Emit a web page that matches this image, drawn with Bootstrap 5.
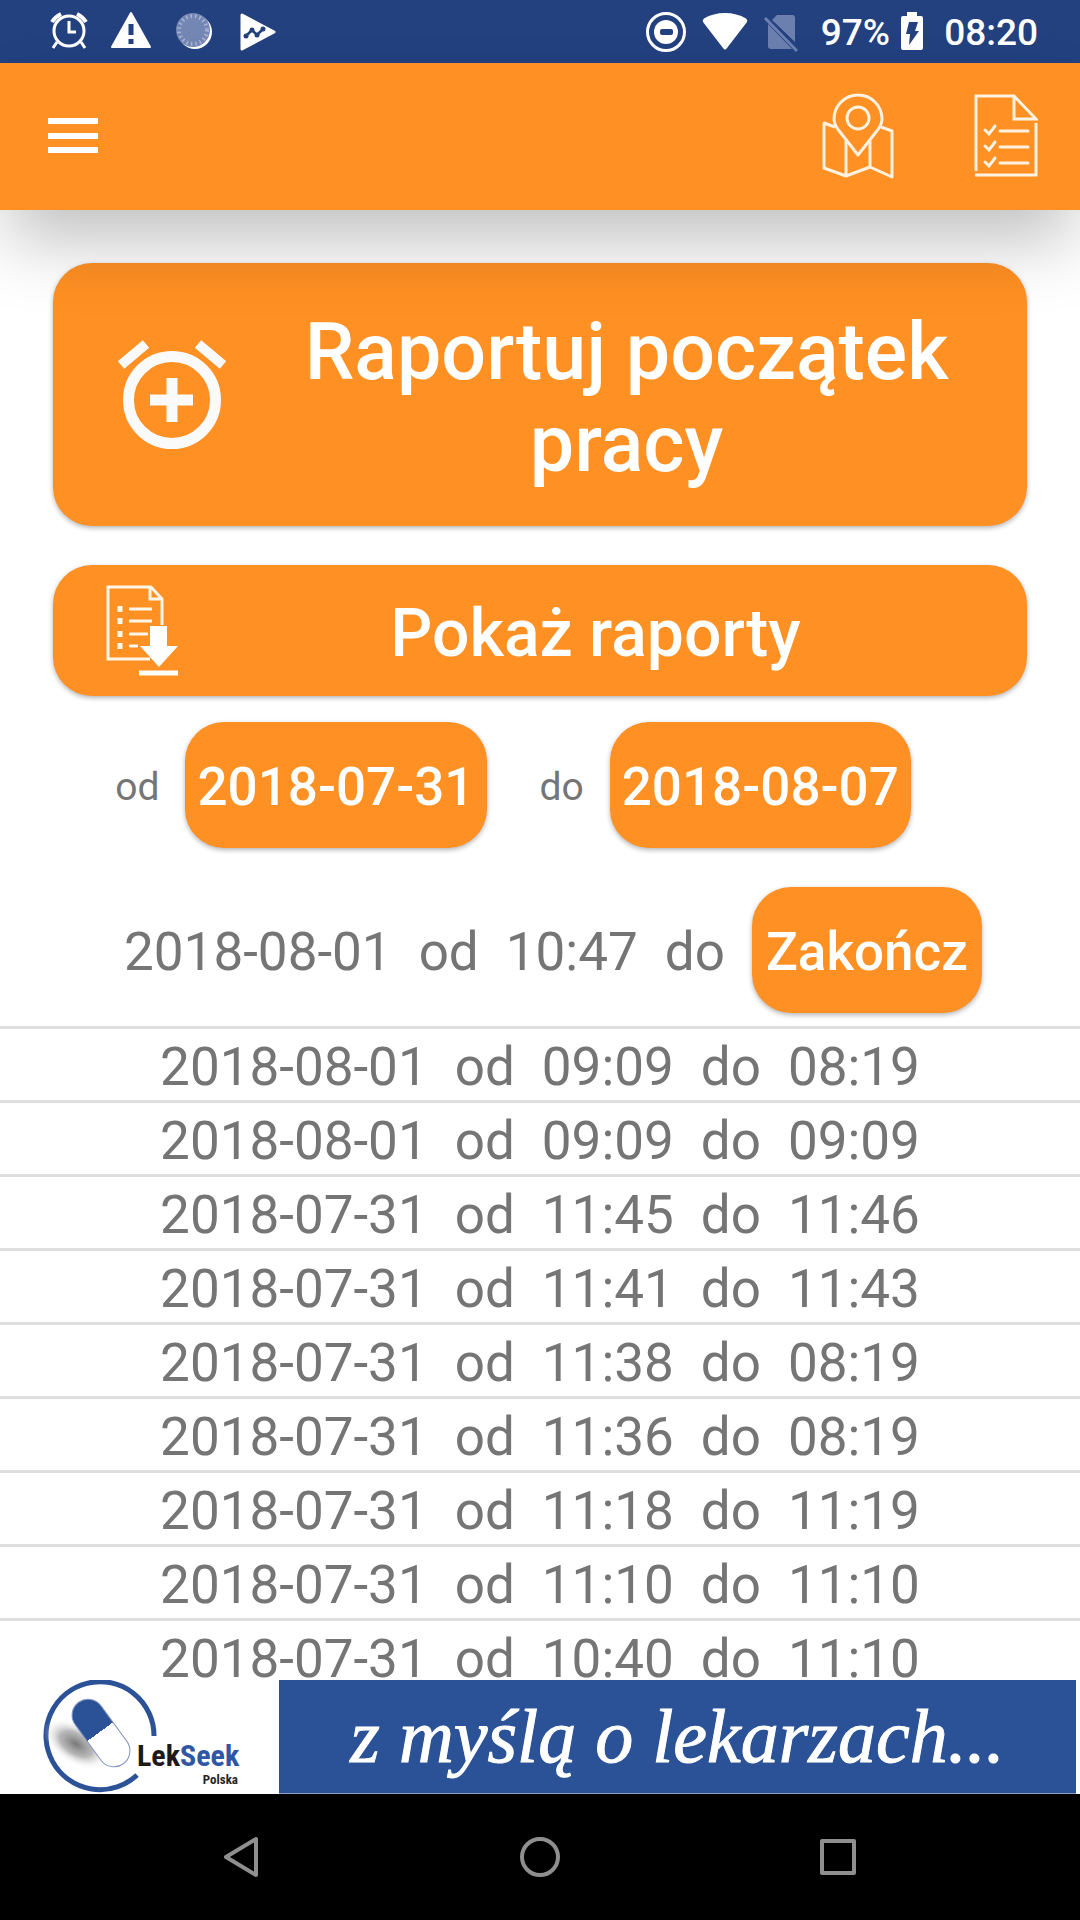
<!DOCTYPE html>
<html lang="pl">
<head>
<meta charset="utf-8">
<meta name="viewport" content="width=device-width, initial-scale=1">
<title>LekSeek – raport czasu pracy</title>
<link href="https://cdn.jsdelivr.net/npm/bootstrap@5.3.0/dist/css/bootstrap.min.css" rel="stylesheet">
<style>
  :root { --brand: #ff9023; --navy: #23407f; --banner: #2b5197; --ink: #757575; --rule: #dedede; }
  body { font-family: Roboto, "Noto Sans", sans-serif; color: var(--ink); background: #fff; font-size: 53px; line-height: 62px; }
  svg { display: block; flex: none; }
  .status-bar { background: var(--navy); color: #fff; height: 63px; padding: 0 42px 0 48px; font-size: 37px; line-height: 44px; font-weight: 500; }
  .status-bar span, .status-bar time { padding-top: 2px; }
  .status-left { gap: 21px; }
  .status-right { gap: 18px; }
  .status-signals { gap: 15px; }
  .app-bar { background: var(--brand); height: 147px; padding: 0 42px 2px 48px; z-index: 2; box-shadow: 0 38px 70px -8px rgba(0,0,0,.25); }
  .app-actions { gap: 80px; }
  .bare { background: none; border: 0; padding: 0; color: #fff; }
  .screen { min-height: 0; overflow-y: auto; scrollbar-width: none; }
  .screen::-webkit-scrollbar { display: none; }
  .actions { padding: 53px 53px 0; gap: 39px; }
  .btn-brand {
    --bs-btn-color: #fff; --bs-btn-bg: var(--brand); --bs-btn-hover-color: #fff; --bs-btn-hover-bg: #f58616;
    --bs-btn-active-color: #fff; --bs-btn-active-bg: #e87b0d; --bs-btn-border-width: 0; --bs-btn-border-radius: 39px;
    --bs-btn-font-weight: 500; --bs-btn-font-size: 53px; --bs-btn-line-height: 62px;
    padding: 34px 14px 30px;
    box-shadow: 0 2px 5px rgba(0,0,0,.3);
  }
  .btn-start { --bs-btn-font-size: 79px; --bs-btn-line-height: 92px; padding: 37px 0 36px 65px; }
  .btn-reports { --bs-btn-font-size: 66px; --bs-btn-line-height: 77px; padding: 20px 14px 20px 53px; }
  .btn-label { padding-top: 6px; }
  .range { padding: 26px 54px 0 0; gap: 53px; font-size: 39px; line-height: 46px; }
  .range-part { gap: 26px; }
  .range-part span { padding-top: 4px; }
  .range-part .btn { padding-left: 12px; padding-right: 12px; }
  .entry { border-bottom: 3px solid var(--rule); padding: 5px 0 0; gap: 27px; line-height: 66px; }
  .entry-open { padding: 39px 0 13px 26px; line-height: 62px; }
  .entry-open span, .entry-open time { padding-top: 4px; }
  .ad-strip { height: 114px; padding-right: 4px; background: #fff; }
  .ad-logo { width: 279px; padding-left: 40px; }
  .ad-text { background: var(--banner); color: #fff; border-bottom: 1px solid #8c9dc4; font: italic 400 76px/112px "Liberation Serif", serif; -webkit-text-stroke: 1px #fff; }
  .logo-name { font: bold 30px "Liberation Sans Narrow", "Roboto Condensed", Roboto, sans-serif; }
  .logo-land { font: bold 13px "Liberation Sans Narrow", "Roboto Condensed", Roboto, sans-serif; }
  .sys-nav { background: #000; height: 126px; gap: 256px; }
</style>
</head>
<body class="vh-100 d-flex flex-column overflow-hidden">

<div class="status-bar d-flex align-items-center justify-content-between flex-shrink-0">
  <div class="status-left d-flex align-items-center">
    <svg width="42" height="42" viewBox="0 1 42 42" fill="none" stroke="#fff" stroke-width="3"><circle cx="21" cy="21" r="15"/><path d="M21 11v11h7M9 32l-4 6M33 32l4 6" /><path d="M4 12q3-5 9-8M38 12q-3-5-9-8" stroke-width="4"/></svg>
    <svg width="42" height="42" viewBox="1 1 42 42"><path d="M21 3 40 37H2Z" fill="#fff" stroke="#fff" stroke-width="2" stroke-linejoin="round"/><path d="M18.500 14h5v11h-5zM18.500 29h5v5h-5z" fill="#23407f"/></svg>
    <svg width="42" height="42" viewBox="1 1 42 42"><circle cx="22" cy="22" r="17" fill="#fff"/><circle cx="20" cy="20" r="17" fill="#7486b3"/><circle cx="20" cy="20" r="14" fill="none" stroke="#a9b5d2" stroke-width="4" stroke-dasharray="1.500 3"/></svg>
    <svg width="42" height="42" viewBox="0 0 42 42"><path d="M5 4 37 21 5 38Z" fill="#fff" stroke="#fff" stroke-width="3" stroke-linejoin="round"/><path d="M9 25 15 19 20 24 26 18" fill="none" stroke="#23407f" stroke-width="2.500"/><g fill="#23407f"><circle cx="9" cy="25" r="2.500"/><circle cx="15" cy="19" r="2.500"/><circle cx="20" cy="24" r="2.500"/><circle cx="26" cy="18" r="2.500"/></g></svg>
  </div>
  <div class="status-right d-flex align-items-center">
    <div class="status-signals d-flex align-items-center">
      <svg width="42" height="42" viewBox="0 0 42 42"><circle cx="21" cy="21" r="18.500" fill="none" stroke="#fff" stroke-width="3"/><circle cx="21" cy="21" r="12" fill="#fff"/><rect x="15" y="18" width="13" height="6" rx="2" fill="#23407f"/></svg>
      <svg width="46" height="42" viewBox="0 0 46 42"><path d="M23 38.500q-1 0-2-1.500L1 11q-1-2 1-3.500Q11 2 23 2t21 5.500q2 1.500 1 3.500L25 37q-1 1.500-2 1.500Z" fill="#fff"/></svg>
      <svg width="40" height="42" viewBox="0 0 40 42"><path d="M14 4h15a3 3 0 0 1 3 3v24L9 9Z M5 13 29 38H8a3 3 0 0 1-3-3Z" fill="#6c80b0"/><path d="M2 7 34 40" stroke="#6c80b0" stroke-width="3"/></svg>
    </div>
    <div class="d-flex align-items-center gap-2"><span>97%</span>
      <svg width="28" height="42" viewBox="0 1 28 42"><path d="M9 2h10v4h4q2 0 2 2v30q0 2-2 2H5q-2 0-2-2V8q0-2 2-2h4Z" fill="#fff"/><path d="M11 12h9l-3 9h4L11 35l1-11H8Z" fill="#23407f"/></svg>
    </div>
    <time>08:20</time>
  </div>
</div>

<header class="app-bar d-flex align-items-center justify-content-between position-relative flex-shrink-0">
  <button type="button" class="bare" aria-label="Menu">
    <svg width="50" height="36" viewBox="0 0 50 36" fill="#fff"><path d="M0 0h50v6H0zM0 15h50v6H0zM0 29h50v6H0z"/></svg>
  </button>
  <div class="app-actions d-flex align-items-center">
    <a href="#mapa" class="bare" aria-label="Mapa">
      <svg width="72" height="86" viewBox="0 0 72 86" fill="none" stroke="#fff2e0" stroke-width="3" stroke-linejoin="round"><path d="M36 62 18 39Q12 32 12 26a24 24 0 0 1 48 0q0 6-6 13Z"/><circle cx="36" cy="25" r="11"/><path d="M13 34 2 30v45l22 8 24-9 22 10V38l-11-4M24 48v35M48 48v26"/></svg>
    </a>
    <a href="#lista" class="bare" aria-label="Lista zadań">
      <svg width="64" height="84" viewBox="0 0 64 84" fill="none" stroke="#fff2e0" stroke-width="3"><path d="M2 77V2h38l22 23H40V2M62 29v52H1"/><g stroke-linecap="round"><path d="M26 37h28M26 53h28M26 69h28"/><path d="m11 36 4 4 6-8M11 52l4 4 6-8M11 68l4 4 6-8"/></g></svg>
    </a>
  </div>
</header>

<main class="screen flex-fill">
  <div class="actions d-flex flex-column">
    <button type="button" class="btn btn-brand btn-start d-flex align-items-center">
      <svg width="108" height="110" viewBox="0 0 108 110" fill="none" stroke="#fafafa" stroke-width="11"><circle cx="54" cy="60" r="43.500"/><path d="M54 38v44M32 60h43"/><path d="M3 25 28 4M105 25 80 4" stroke-width="10"/></svg>
      <span class="btn-label flex-fill">Raportuj początek pracy</span>
    </button>
    <button type="button" class="btn btn-brand btn-reports d-flex align-items-center">
      <svg width="72" height="91" viewBox="0 0 72 91" fill="none" stroke="#fff6ea" stroke-width="3"><path d="M44 74H2V2h43l11 12v26M44 2v12h12"/><path d="M23 24h23M23 36h23M23 49h19M23 61h9"/><path d="M14 21v6M14 33v6M14 46v6M14 58v6" stroke-width="5"/><path d="M44 41h17v20h11L53 82 34 61h10Z" fill="#fff" stroke="none"/><path d="M33 88h39" stroke="#fff" stroke-width="5"/></svg>
      <span class="btn-label flex-fill">Pokaż raporty</span>
    </button>
  </div>

  <div class="range d-flex justify-content-center">
    <div class="range-part d-flex align-items-center"><span id="from-label">od</span><button type="button" id="from" class="btn btn-brand" aria-labelledby="from-label from">2018-07-31</button></div>
    <div class="range-part d-flex align-items-center"><span id="to-label">do</span><button type="button" id="to" class="btn btn-brand" aria-labelledby="to-label to">2018-08-07</button></div>
  </div>

  <ul class="list-unstyled mb-0">
    <li class="entry entry-open d-flex align-items-center justify-content-center"><time>2018-08-01</time><span>od</span><time>10:47</time><span>do</span><button type="button" class="btn btn-brand">Zakończ</button></li>
    <li class="entry d-flex justify-content-center"><time>2018-08-01</time><span>od</span><time>09:09</time><span>do</span><time>08:19</time></li>
    <li class="entry d-flex justify-content-center"><time>2018-08-01</time><span>od</span><time>09:09</time><span>do</span><time>09:09</time></li>
    <li class="entry d-flex justify-content-center"><time>2018-07-31</time><span>od</span><time>11:45</time><span>do</span><time>11:46</time></li>
    <li class="entry d-flex justify-content-center"><time>2018-07-31</time><span>od</span><time>11:41</time><span>do</span><time>11:43</time></li>
    <li class="entry d-flex justify-content-center"><time>2018-07-31</time><span>od</span><time>11:38</time><span>do</span><time>08:19</time></li>
    <li class="entry d-flex justify-content-center"><time>2018-07-31</time><span>od</span><time>11:36</time><span>do</span><time>08:19</time></li>
    <li class="entry d-flex justify-content-center"><time>2018-07-31</time><span>od</span><time>11:18</time><span>do</span><time>11:19</time></li>
    <li class="entry d-flex justify-content-center"><time>2018-07-31</time><span>od</span><time>11:10</time><span>do</span><time>11:10</time></li>
    <li class="entry d-flex justify-content-center"><time>2018-07-31</time><span>od</span><time>10:40</time><span>do</span><time>11:10</time></li>
  </ul>
</main>

<footer class="flex-shrink-0">
  <div class="ad-strip d-flex">
    <div class="ad-logo flex-shrink-0">
      <svg width="220" height="114" viewBox="0 0 220 114">
        <defs>
          <radialGradient id="shade"><stop offset="0" stop-color="#777"/><stop offset=".5" stop-color="#999" stop-opacity=".7"/><stop offset="1" stop-color="#fff" stop-opacity="0"/></radialGradient>
          <linearGradient id="half" x1="0" y1="0" x2="0" y2="1"><stop offset=".48" stop-color="#2b5197"/><stop offset=".48" stop-color="#fff"/></linearGradient>
        </defs>
        <path d="M114 56A54 54 0 1 0 97 95" fill="none" stroke="#2b5197" stroke-width="5"/>
        <ellipse cx="36" cy="64" rx="36" ry="20" fill="url(#shade)" transform="rotate(32 36 64)"/>
        <rect x="45" y="15" width="32" height="76" rx="16" fill="url(#half)" stroke="#8496c2" stroke-width="1" transform="rotate(-36 61 53)"/>
        <text class="logo-name" x="97" y="86" fill="#1d1a18">Lek<tspan fill="#2f57a5">Seek</tspan></text>
        <text class="logo-land" x="198" y="104" text-anchor="end" fill="#2b2624">Polska</text>
      </svg>
    </div>
    <div class="ad-text flex-fill text-center">z myślą o lekarzach...</div>
  </div>
  <nav class="sys-nav d-flex align-items-center justify-content-center" aria-label="System">
    <button type="button" class="bare" aria-label="Wstecz"><svg width="42" height="42" viewBox="0 0 42 42" fill="none" stroke="#8f8f8f" stroke-width="4" stroke-linejoin="round"><path d="M35 3v36L5 21Z"/></svg></button>
    <button type="button" class="bare" aria-label="Ekran główny"><svg width="42" height="42" viewBox="0 0 42 42" fill="none" stroke="#8f8f8f" stroke-width="4"><circle cx="21" cy="21" r="18"/></svg></button>
    <button type="button" class="bare" aria-label="Ostatnie"><svg width="42" height="42" viewBox="0 0 42 42" fill="none" stroke="#8f8f8f" stroke-width="4" stroke-linejoin="round"><rect x="5" y="5" width="32" height="32"/></svg></button>
  </nav>
</footer>

<script src="https://cdn.jsdelivr.net/npm/bootstrap@5.3.0/dist/js/bootstrap.bundle.min.js"></script>
</body>
</html>
